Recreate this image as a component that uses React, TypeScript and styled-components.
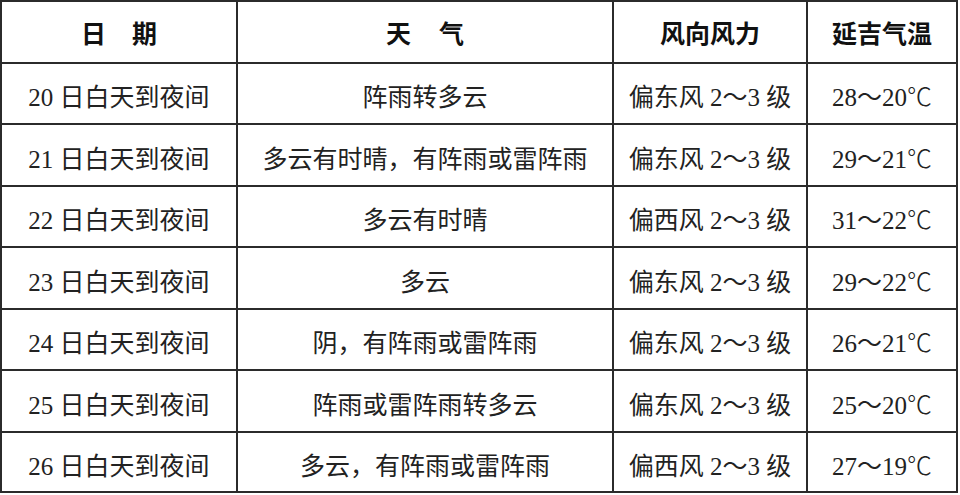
import React from "react";
import styled, { createGlobalStyle } from "styled-components";

const Global = createGlobalStyle`
  html, body { margin: 0; padding: 0; background: #ffffff; }
  body { width: 960px; height: 495px; overflow: hidden; }
`;

const Table = styled.div`
  display: grid;
  grid-template-columns: 236px 376px 194px 150px;
  grid-template-rows: 62px 61px 62px 61px 62px 61px 62px 60px;
  width: 958px;
  box-sizing: border-box;
  border-left: 2px solid #2b2b2b;
  border-top: 2px solid #2b2b2b;
  font-family: "Liberation Serif", "Noto Sans CJK SC", serif;
  color: #1e1e1e;
`;

const Cell = styled.div<{ $head?: boolean }>`
  box-sizing: border-box;
  border-right: 2px solid #2b2b2b;
  border-bottom: 2px solid #2b2b2b;
  display: flex;
  align-items: center;
  justify-content: center;
  font-size: 25px;
  font-weight: ${(p) => (p.$head ? 700 : 400)};
  font-family: ${(p) =>
    p.$head
      ? '"Noto Sans CJK SC", sans-serif'
      : '"Liberation Serif", "Noto Sans CJK SC", serif'};
  color: ${(p) => (p.$head ? "#111" : "#222")};
  white-space: nowrap;
  padding-top: ${(p) => (p.$head ? "0" : "3px")};
`;

const Spaced = styled.span<{ $gap: number }>`
  display: inline-flex;
  gap: ${(p) => p.$gap}px;
`;

const Deg = styled.span`
  font-family: "Noto Sans CJK SC", sans-serif;
  font-weight: 300;
`;

const rows = [
  ["20", "阵雨转多云", "偏东风", "28～20"],
  ["21", "多云有时晴，有阵雨或雷阵雨", "偏东风", "29～21"],
  ["22", "多云有时晴", "偏西风", "31～22"],
  ["23", "多云", "偏东风", "29～22"],
  ["24", "阴，有阵雨或雷阵雨", "偏东风", "26～21"],
  ["25", "阵雨或雷阵雨转多云", "偏东风", "25～20"],
  ["26", "多云，有阵雨或雷阵雨", "偏西风", "27～19"],
];

export default function App() {
  return (
    <>
      <Global />
      <Table>
        <Cell $head>
          <Spaced $gap={26}>
            <span>日</span>
            <span>期</span>
          </Spaced>
        </Cell>
        <Cell $head>
          <Spaced $gap={28}>
            <span>天</span>
            <span>气</span>
          </Spaced>
        </Cell>
        <Cell $head>风向风力</Cell>
        <Cell $head>延吉气温</Cell>
        {rows.map(([d, w, wind, t]) => (
          <React.Fragment key={d}>
            <Cell>{d} 日白天到夜间</Cell>
            <Cell>{w}</Cell>
            <Cell>{wind} 2～3 级</Cell>
            <Cell>
              {t}
              <Deg>℃</Deg>
            </Cell>
          </React.Fragment>
        ))}
      </Table>
    </>
  );
}
